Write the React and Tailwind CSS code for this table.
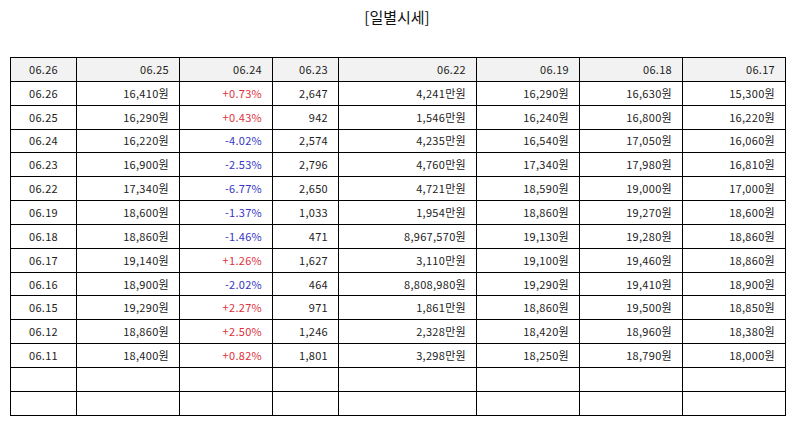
import React from 'react';

const header = ['06.26', '06.25', '06.24', '06.23', '06.22', '06.19', '06.18', '06.17'];

const rows = [
  ['06.26', '16,410원', '+0.73%', '2,647', '4,241만원', '16,290원', '16,630원', '15,300원'],
  ['06.25', '16,290원', '+0.43%', '942', '1,546만원', '16,240원', '16,800원', '16,220원'],
  ['06.24', '16,220원', '-4.02%', '2,574', '4,235만원', '16,540원', '17,050원', '16,060원'],
  ['06.23', '16,900원', '-2.53%', '2,796', '4,760만원', '17,340원', '17,980원', '16,810원'],
  ['06.22', '17,340원', '-6.77%', '2,650', '4,721만원', '18,590원', '19,000원', '17,000원'],
  ['06.19', '18,600원', '-1.37%', '1,033', '1,954만원', '18,860원', '19,270원', '18,600원'],
  ['06.18', '18,860원', '-1.46%', '471', '8,967,570원', '19,130원', '19,280원', '18,860원'],
  ['06.17', '19,140원', '+1.26%', '1,627', '3,110만원', '19,100원', '19,460원', '18,860원'],
  ['06.16', '18,900원', '-2.02%', '464', '8,808,980원', '19,290원', '19,410원', '18,900원'],
  ['06.15', '19,290원', '+2.27%', '971', '1,861만원', '18,860원', '19,500원', '18,850원'],
  ['06.12', '18,860원', '+2.50%', '1,246', '2,328만원', '18,420원', '18,960원', '18,380원'],
  ['06.11', '18,400원', '+0.82%', '1,801', '3,298만원', '18,250원', '18,790원', '18,000원'],
  ['', '', '', '', '', '', '', ''],
  ['', '', '', '', '', '', '', ''],
];

const widths = ['w-[66px]', 'w-[103px]', 'w-[93px]', 'w-[66px]', 'w-[138px]', 'w-[103px]', 'w-[103px]', 'w-[103px]'];

const rateColor = (v) => {
  if (v.startsWith('+')) return 'text-[#e0303c]';
  if (v.startsWith('-')) return 'text-[#3535c8]';
  return '';
};

const Cell = ({ value, col, head }) => (
  <td
    className={`h-[23.85px] border border-black px-[10px] py-0 leading-none ${
      col === 0 ? 'text-center' : 'text-right'
    } ${head ? 'bg-[#f2f2f2]' : ''} ${col === 2 ? rateColor(value) : ''}`}
  >
    {value}
  </td>
);

export default function App() {
  return (
    <div
      className="w-[794px] h-[425px] bg-white text-[#222] pt-[6px]"
      style={{ fontFamily: '"Noto Sans CJK KR", "Noto Sans", sans-serif' }}
    >
      <h1 className="text-center text-[15px] leading-[22px] font-normal text-[#111]">[일별시세]</h1>
      <div className="px-[10px] pt-[29px]">
        <table className="table-fixed border-collapse w-[775px] text-[11px] tracking-[0.3px]">
          <colgroup>
            {widths.map((w, i) => (
              <col key={i} className={w} />
            ))}
          </colgroup>
          <thead>
            <tr>
              {header.map((h, i) => (
                <Cell key={i} value={h} col={i} head />
              ))}
            </tr>
          </thead>
          <tbody>
            {rows.map((r, ri) => (
              <tr key={ri}>
                {r.map((v, ci) => (
                  <Cell key={ci} value={v} col={ci} />
                ))}
              </tr>
            ))}
          </tbody>
        </table>
      </div>
    </div>
  );
}
